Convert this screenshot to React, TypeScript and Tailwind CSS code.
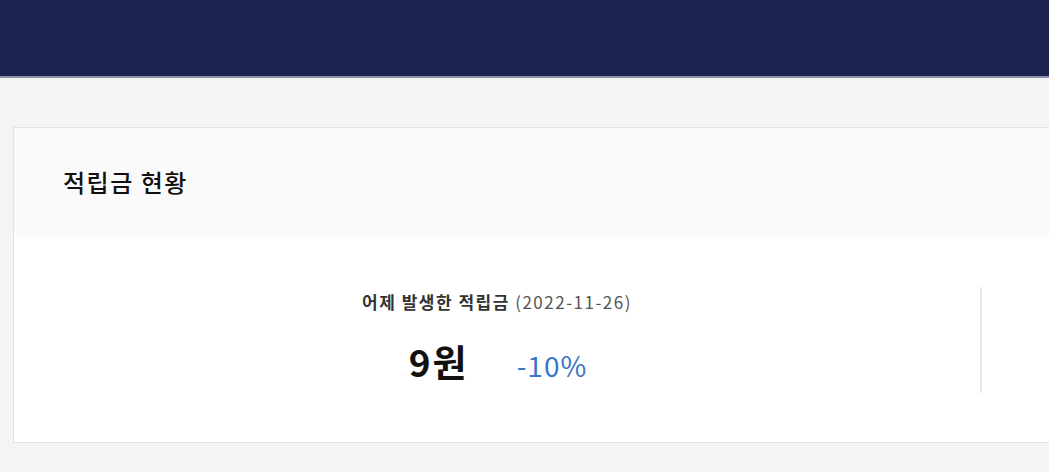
import React from "react";

export default function App() {
  return (
    <div
      className="min-h-[472px] w-[1049px] overflow-hidden bg-[#f4f4f4]"
      style={{ fontFamily: '"Noto Sans CJK KR", "Noto Sans", sans-serif' }}
    >
      <div className="h-[78px] bg-[#1b2350] border-b-2 border-[#8d91a8]" />
      <div className="pt-[49px] pl-[13px]">
        <div className="w-[1100px] border border-[#e2e2e2] bg-white">
          <div className="flex h-[109px] items-center bg-[#fafafa] pl-[49px]">
            <h2 className="text-[24px] font-medium tracking-[1.5px] text-[#111] leading-none pb-[1px]">
              적립금 현황
            </h2>
          </div>
          <div className="flex h-[205px] items-center">
            <div className="flex h-[106px] w-[968px] flex-col items-center justify-start border-r-2 border-[#e8e8e8] pt-[3px]">
              <p className="text-[17px] leading-[24px] tracking-[1.5px] text-[#333]">
                <span className="font-bold">어제 발생한 적립금</span>{" "}
                <span className="text-[#555]">(2022-11-26)</span>
              </p>
              <div className="mt-[29px] flex items-baseline gap-[48px] pl-[2px]">
                <span className="text-[37px] font-bold leading-none tracking-[2px] text-[#111]">9원</span>
                <span className="text-[28px] leading-none tracking-[1px] text-[#3a74c8]">-10%</span>
              </div>
            </div>
          </div>
        </div>
      </div>
    </div>
  );
}
